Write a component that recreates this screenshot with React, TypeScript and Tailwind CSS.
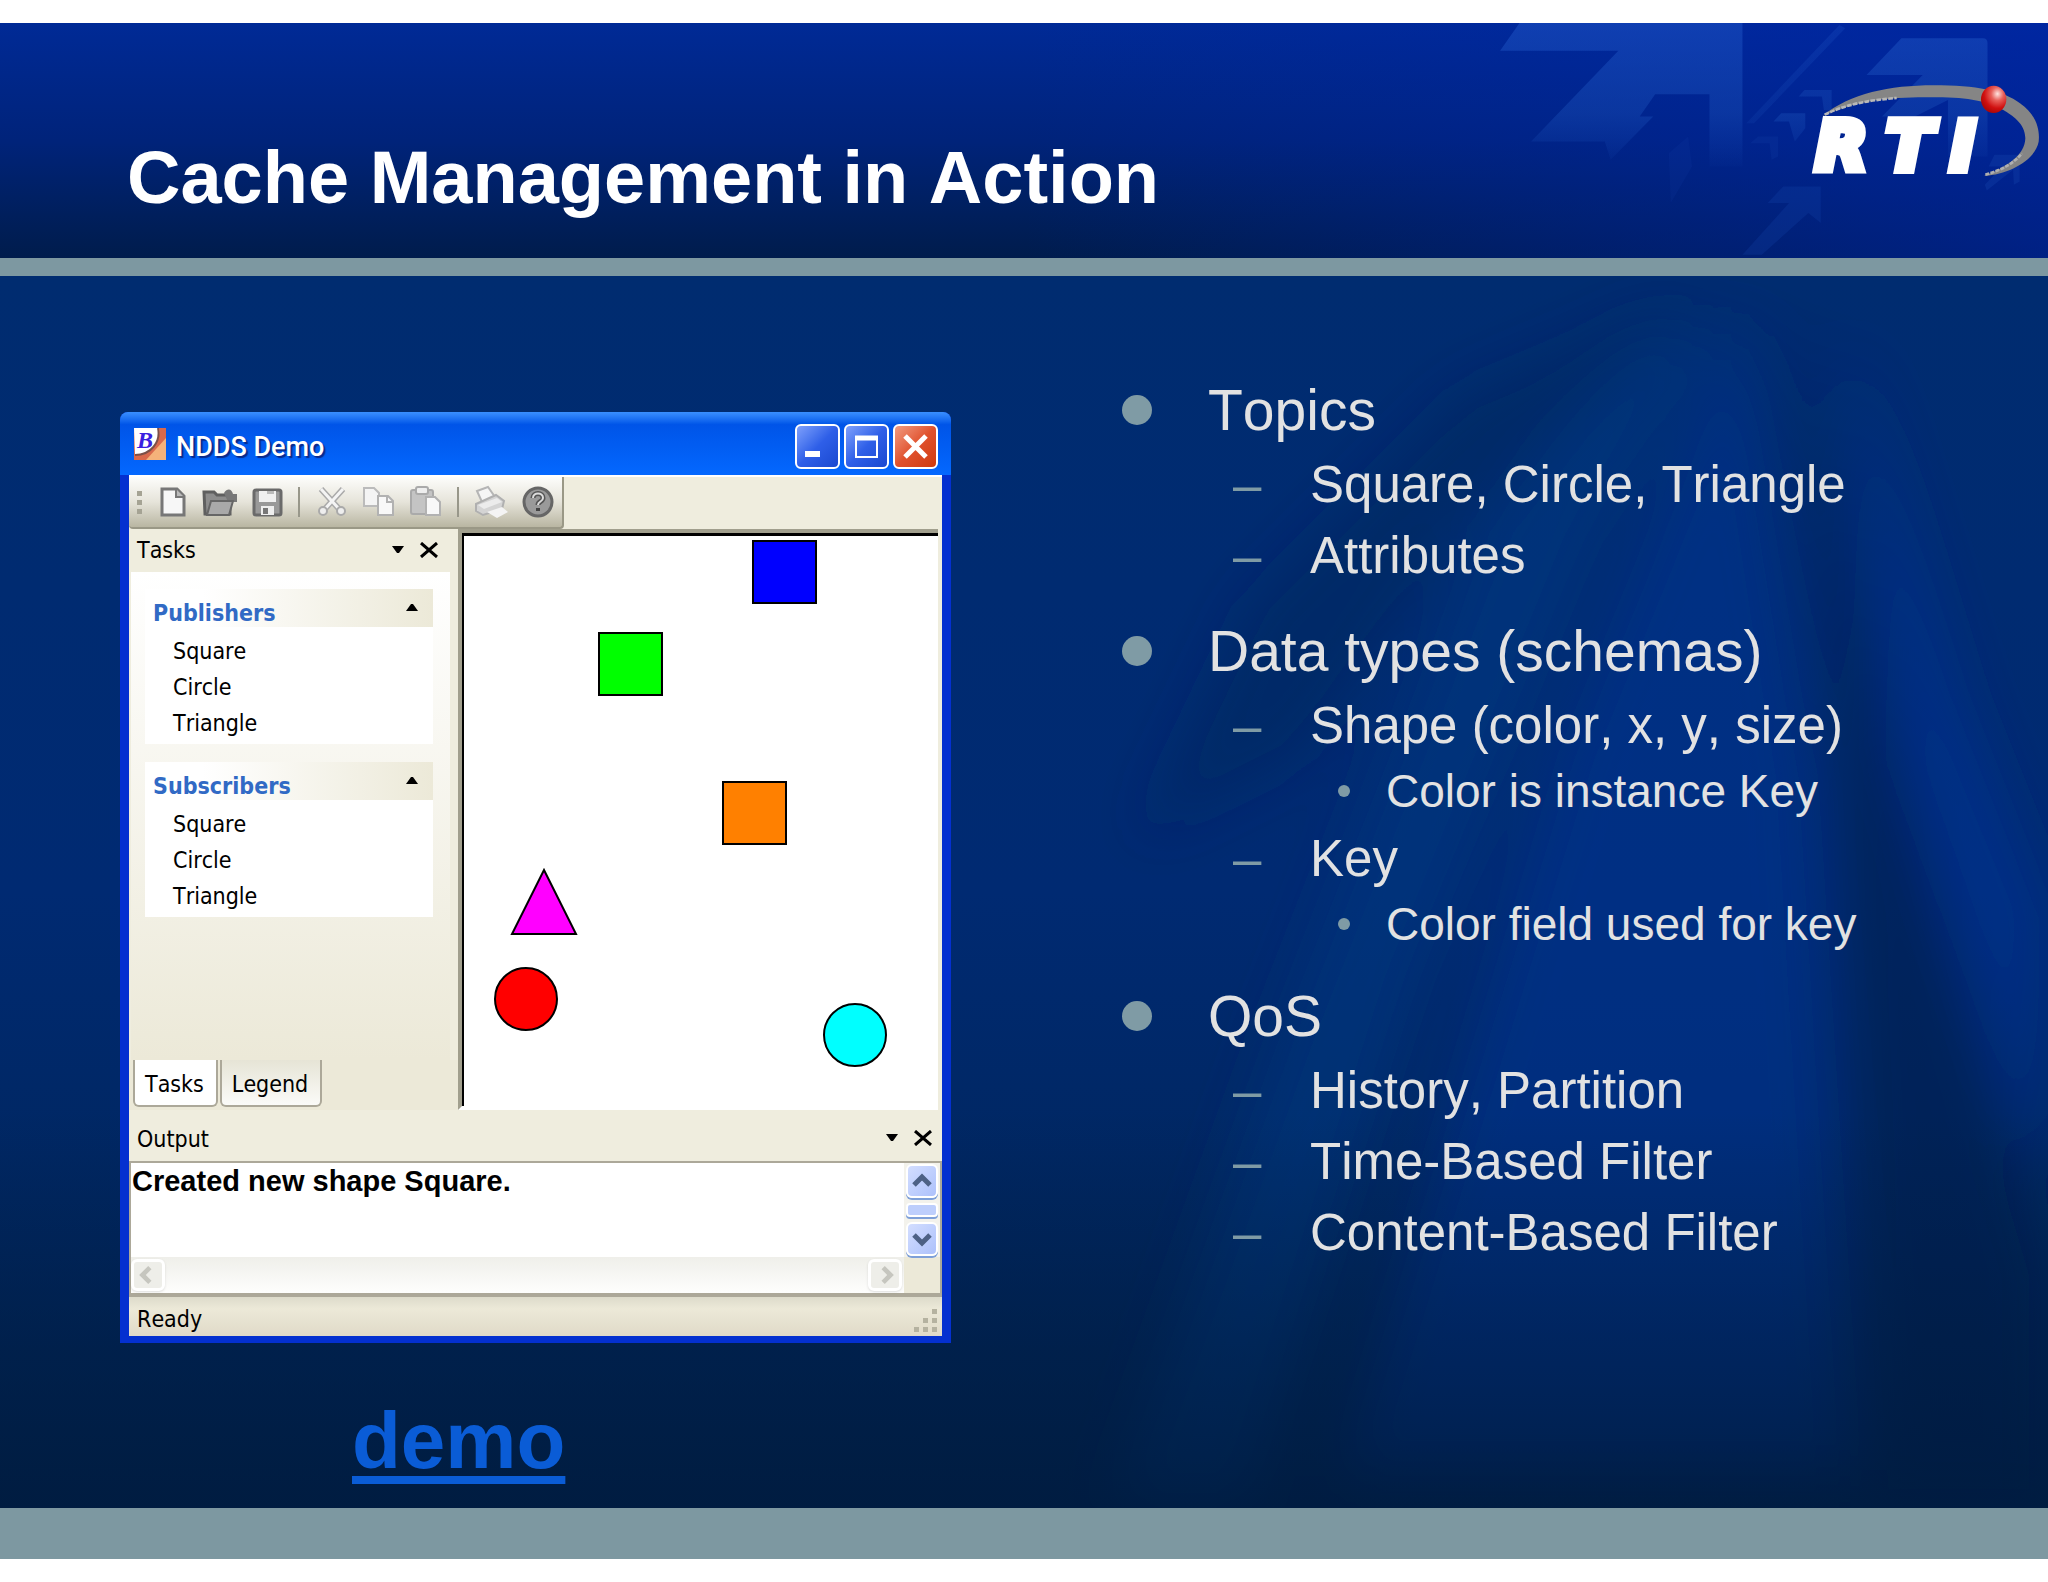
import React, { useState } from 'react';

type Level = 1 | 2 | 3;

interface OutlineItem {
  level: Level;
  text: string;
}

const outline: OutlineItem[] = [
  { level: 1, text: 'Topics' },
  { level: 2, text: 'Square, Circle, Triangle' },
  { level: 2, text: 'Attributes' },
  { level: 1, text: 'Data types (schemas)' },
  { level: 2, text: 'Shape (color, x, y, size)' },
  { level: 3, text: 'Color is instance Key' },
  { level: 2, text: 'Key' },
  { level: 3, text: 'Color field used for key' },
  { level: 1, text: 'QoS' },
  { level: 2, text: 'History, Partition' },
  { level: 2, text: 'Time-Based Filter' },
  { level: 2, text: 'Content-Based Filter' },
];

const shapeNames = ['Square', 'Circle', 'Triangle'];

const Logo = () => (
  <svg viewBox="0 0 774 390" className="relative h-[130px] w-[258px] shrink-0" role="img" aria-label="RTI">
    <defs>
      <radialGradient id="ball" cx="0.65" cy="0.3" r="0.7">
        <stop offset="0" stopColor="#ffe4e0" />
        <stop offset="0.35" stopColor="#e8605a" />
        <stop offset="0.75" stopColor="#d01010" />
        <stop offset="1" stopColor="#b00808" />
      </radialGradient>
    </defs>
    <path
      d="M98 138 C180 70 300 46 430 46 C560 46 640 62 690 100 C740 135 750 180 746 215 C735 270 660 312 582 318 C650 292 705 255 706 205 C706 160 665 135 640 120 C590 95 540 82 440 82 C320 80 210 86 98 138Z"
      fill="#858585"
    />
    <path d="M104 134 C170 102 240 90 320 84" fill="none" stroke="#b8b8b8" strokeWidth="8" strokeDasharray="14 4" />
    <path d="M586 314 C630 302 670 282 696 250" fill="none" stroke="#b0b0b0" strokeWidth="8" strokeDasharray="12 4" />
    <ellipse cx="611" cy="88" rx="38" ry="41" fill="url(#ball)" />
    <g
      fill="#fff"
      stroke="#fff"
      strokeWidth="24"
      fontFamily="'DejaVu Sans', sans-serif"
      fontWeight="700"
      fontStyle="italic"
      fontSize="204"
    >
      <text x="76" y="300">R</text>
      <text x="288" y="300">T</text>
      <text x="480" y="300">I</text>
    </g>
  </svg>
);

const HeaderArrows = () => (
  <svg
    viewBox="0 69 1568 706"
    preserveAspectRatio="none"
    className="absolute top-0 right-0 h-full w-[608px]"
    aria-hidden="true"
  >
    <defs>
      <linearGradient id="arrowFade" x1="0" y1="69" x2="0" y2="520" gradientUnits="userSpaceOnUse">
        <stop offset="0" stopColor="#1a4ec0" stopOpacity="0.6" />
        <stop offset="0.6" stopColor="#1a50b8" stopOpacity="0.4" />
        <stop offset="1" stopColor="#1a50b8" stopOpacity="0" />
      </linearGradient>
    </defs>
    <g fill="url(#arrowFade)">
      <path d="M205 69 H780 V500 H695 V283 H555 L515 350 H550 L440 480 L425 425 H235 L460 152 H155Z" />
      <path d="M1190 115 H1400 Q1412 115 1412 130 V470 H1310 V300 L1225 350 H1140 L1245 225 H1100Z" />
      <path d="M1030 75 L1045 85 L810 370 L790 370Z" opacity="0.5" />
      <path d="M940 270 H1010 V330 L990 330 L985 290 L925 290Z" opacity="0.8" />
      <path d="M880 340 H942 V385 L915 425 L900 365 H860Z" />
    </g>
    <g fill="#1a50b8">
      <path d="M885 560 H982 V670 L950 640 L830 765 H780 L900 610 H845Z" opacity="0.2" />
      <path d="M1430 465 H1495 V545 L1480 555 L1478 510 L1410 572 L1405 555 L1450 500 H1415Z" opacity="0.25" />
      <path d="M620 430 L640 410 L650 500 L595 610 L590 460Z" opacity="0.1" />
      <path d="M820 410 H872 V470 L855 480 L850 430 H800Z" opacity="0.15" />
    </g>
  </svg>
);

// Soft light rays fanning out from the top right
const Rays = () => (
  <svg
    viewBox="0 0 2048 1232"
    preserveAspectRatio="none"
    className="absolute inset-0 h-full w-full"
    aria-hidden="true"
  >
    <defs>
      <filter id="soft" x="-20%" y="-20%" width="140%" height="140%">
        <feGaussianBlur stdDeviation="28" />
      </filter>
      <linearGradient id="floor" x1="0" y1="0" x2="0" y2="1">
        <stop offset="0.68" stopColor="#001a3c" stopOpacity="0" />
        <stop offset="1" stopColor="#001a3c" stopOpacity="0.75" />
      </linearGradient>
    </defs>
    <g filter="url(#soft)">
      <path d="M1640 60 L1480 250 L1280 760 L1110 1232 H1250 L1420 700 L1600 260 L1720 60Z" fill="#003a86" opacity="0.45" />
      <path d="M1700 20 L1460 120 L1250 330 L1140 560 L1300 480 L1470 240Z" fill="#00235a" opacity="0.4" />
      <path d="M1740 40 L1560 480 L1340 1200 H1850 L1810 500Z" fill="#003490" opacity="0.6" />
      <path d="M1790 40 L1830 420 L1870 1232 H2048 V1000 L1960 700 L1860 340Z" fill="#001f50" opacity="0.6" />
      <path d="M1850 60 L1900 480 L2010 820 L2048 900 V640 L1960 420Z" fill="#0038a0" opacity="0.45" />
    </g>
    <rect width="2048" height="1232" fill="url(#floor)" />
  </svg>
);

const OutlineRow = ({ level, text }: OutlineItem) => {
  if (level === 1) {
    return (
      <li className="mt-[33px] flex items-center text-[57px] leading-[66px] first:mt-0">
        <span className="mr-14 size-[30px] shrink-0 rounded-full bg-[#7f9ba5]" />
        {text}
      </li>
    );
  }
  if (level === 2) {
    return (
      <li className="mt-[13px] flex pl-[111px] text-[51px] leading-[58px]">
        <span className="w-[77px] shrink-0 text-[#7f9ba5]">–</span>
        {text}
      </li>
    );
  }
  return (
    <li className="mt-[10px] flex items-center pl-[216px] text-[46px] leading-[52px]">
      <span className="mr-9 size-3 shrink-0 rounded-full bg-[#7f9ba5]" />
      {text}
    </li>
  );
};

const CaptionButton = ({ label, color, children }: { label: string; color: string; children: React.ReactNode }) => (
  <button aria-label={label} className={`size-[45px] rounded-md border-2 border-white ${color}`}>
    <svg viewBox="0 0 41 41" className="size-full" fill="none" stroke="#fff">
      {children}
    </svg>
  </button>
);

const ToolButton = ({ label, children }: { label: string; children: React.ReactNode }) => (
  <button aria-label={label} className="flex h-full w-[47px] items-center justify-center">
    <svg viewBox="0 0 36 36" className="size-9">
      {children}
    </svg>
  </button>
);

const ToolSeparator = () => <span className="mx-2 h-[30px] w-[2px] bg-[#98978a]" />;

const Toolbar = () => (
  <div className="h-[54px] border-t-2 border-white bg-[#efedde]">
    <div className="flex h-[52px] w-[435px] items-center rounded-b border-r-2 border-b-2 border-[#9a9886] bg-linear-to-b from-[#fdfdfb] via-[#e6e4da] to-[#b9b6a2]">
      <span className="flex w-5 flex-col items-center gap-1">
        <i className="size-[5px] bg-[#a5a394]" />
        <i className="size-[5px] bg-[#a5a394]" />
        <i className="size-[5px] bg-[#a5a394]" />
      </span>
      <ToolButton label="New">
        <path d="M7 5 H22 L29 12 V31 H7Z" fill="#f7f7f7" stroke="#777" strokeWidth="3" />
        <path d="M21 5 V13 H29" fill="#bbb" stroke="#777" strokeWidth="2" />
      </ToolButton>
      <ToolButton label="Open">
        <path d="M2 8 H12 L15 11 H28 V30 H3Z" fill="#8c8c8c" stroke="#5f5f5f" strokeWidth="3" />
        <path d="M22 9 C26 3 30 6 31 10 H35 V18 H26Z" fill="#777" />
        <path d="M9 17 H31 L27 31 H5Z" fill="#a9a9a9" stroke="#666" strokeWidth="2" />
      </ToolButton>
      <ToolButton label="Save">
        <rect x="5" y="6" width="27" height="25" rx="2" fill="#999" stroke="#6a6a6a" strokeWidth="3" />
        <rect x="10" y="7" width="17" height="11" fill="#f0f0f0" />
        <rect x="18" y="7" width="7" height="3" fill="#bbb" />
        <rect x="12" y="22" width="13" height="9" fill="#eee" />
        <rect x="14" y="24" width="5" height="6" fill="#777" />
      </ToolButton>
      <ToolSeparator />
      <ToolButton label="Cut">
        <path d="M7 5 L26 26 M29 5 L10 26" stroke="#aaa" strokeWidth="6" fill="none" />
        <path d="M7 5 L26 26 M29 5 L10 26" stroke="#f4f4f4" strokeWidth="3" fill="none" />
        <circle cx="9" cy="27" r="4" fill="#eee" stroke="#aaa" strokeWidth="2" />
        <circle cx="27" cy="27" r="4" fill="#eee" stroke="#aaa" strokeWidth="2" />
      </ToolButton>
      <ToolButton label="Copy">
        <path d="M3 4 H13 L18 9 V22 H3Z" fill="#f4f4f4" stroke="#bbb" strokeWidth="2" />
        <path d="M17 12 H27 L32 17 V31 H17Z" fill="#f8f8f8" stroke="#b2b2b2" strokeWidth="2" />
        <path d="M26 12 V18 H32" fill="none" stroke="#b2b2b2" strokeWidth="2" />
      </ToolButton>
      <ToolButton label="Paste">
        <rect x="3" y="6" width="22" height="24" rx="2" fill="#c4c4c4" stroke="#aaa" strokeWidth="2" />
        <rect x="8" y="3" width="12" height="7" rx="2" fill="#eee" stroke="#aaa" strokeWidth="2" />
        <path d="M18 13 H27 L32 18 V31 H18Z" fill="#f8f8f8" stroke="#b2b2b2" strokeWidth="2" />
      </ToolButton>
      <ToolSeparator />
      <ToolButton label="Print">
        <path d="M4 7 L15 3 L22 13 L9 18Z" fill="#f5f5f5" stroke="#b5b5b5" strokeWidth="2" />
        <path d="M3 20 L23 11 L31 17 L29 25 L10 31 L3 27Z" fill="#d4d4d4" stroke="#b0b0b0" strokeWidth="2" />
        <path d="M5 21 L24 14 L29 18 L11 25Z" fill="#ececec" />
        <path d="M14 28 L29 23 L35 28 L24 34Z" fill="#f4f4f4" />
      </ToolButton>
      <ToolButton label="Help">
        <circle cx="18" cy="18" r="14" fill="#9a9a9a" stroke="#666" strokeWidth="3" />
        <path d="M13 14 C13 8 23 8 23 14 C23 18 18 17 18 21" fill="none" stroke="#555" strokeWidth="5" />
        <path d="M13 14 C13 8 23 8 23 14 C23 18 18 17 18 21" fill="none" stroke="#ddd" strokeWidth="2" />
        <rect x="16" y="24" width="4" height="3" fill="#444" />
      </ToolButton>
    </div>
  </div>
);

const PaneControls = () => (
  <div className="flex items-center gap-4">
    <button aria-label="Pane menu">
      <svg viewBox="0 0 12 8" className="h-2 w-3">
        <path d="M0 0 H12 L7 7 H5Z" />
      </svg>
    </button>
    <button aria-label="Close pane">
      <svg viewBox="0 0 18 16" className="h-4 w-[18px]" stroke="#000" strokeWidth="3">
        <path d="M1 1 L17 15 M17 1 L1 15" />
      </svg>
    </button>
  </div>
);

const TaskGroup = ({ title }: { title: string }) => (
  <section className="bg-white">
    <h3 className="flex h-[38px] items-start justify-between bg-linear-to-r from-white from-20% to-[#ece9d8] pr-[15px] pl-2 text-[#316ac5]">
      <span className="pt-[10px] leading-7 font-bold">{title}</span>
      <button aria-label={`Collapse ${title}`} className="mt-[14px]">
        <svg viewBox="0 0 12 8" className="h-2 w-3">
          <path d="M0 8 H12 L7 1 H5Z" />
        </svg>
      </button>
    </h3>
    <ul className="pt-[6px] pb-[3px] pl-7 leading-9">
      {shapeNames.map((name) => (
        <li key={name}>
          <button className="block">{name}</button>
        </li>
      ))}
    </ul>
  </section>
);

const ShapeCanvas = () => (
  <div className="min-w-0 flex-1 pr-1">
    <div className="h-full border-t-4 border-b-4 border-l-4 border-[#a19f8d] border-b-white">
      <div className="h-full border-t-[3px] border-l-2 border-black bg-white">
        <svg className="block h-[570px] w-full" stroke="#000" strokeWidth="2">
          <rect x="289" y="5" width="63" height="62" fill="#0000ff" />
          <rect x="135" y="97" width="63" height="62" fill="#00ff00" />
          <rect x="259" y="246" width="63" height="62" fill="#ff8000" />
          <path d="M80 334 L112 398 H48Z" fill="#ff00ff" />
          <circle cx="62" cy="463" r="31" fill="#ff0000" />
          <circle cx="391" cy="499" r="31" fill="#00ffff" />
        </svg>
      </div>
    </div>
  </div>
);

const ScrollButton = ({ label, d, disabled = false }: { label: string; d: string; disabled?: boolean }) => (
  <button
    aria-label={label}
    disabled={disabled}
    className={
      disabled
        ? 'h-8 w-[34px] rounded-md border-3 border-white bg-[#eeeee9] text-[#c6c6bf] shadow'
        : 'h-[34px] w-8 rounded-md border-2 border-white bg-linear-to-br from-[#d3deff] to-[#adc1fb] text-[#4d6185] shadow-[0_2px_0_#7d9fd8]'
    }
  >
    <svg viewBox="0 0 28 28" className="size-full" fill="none" stroke="currentColor" strokeWidth="5">
      <path d={d} />
    </svg>
  </button>
);

const OutputPane = () => (
  <>
    <div className="flex h-[51px] items-center justify-between pt-1 pr-[10px] pl-2">
      <h2 className="pt-[2px] leading-7">Output</h2>
      <PaneControls />
    </div>
    <div className="border-x-2 border-t-2 border-b-4 border-[#aca899]">
      <div className="flex h-[94px] bg-white">
        <p className="flex-1 pt-[2px] pl-px font-['Liberation_Sans',sans-serif] text-[29px] leading-8 font-bold">
          Created new shape Square.
        </p>
        <div className="flex w-9 flex-col items-center bg-[#f3f2ec] pt-px">
          <ScrollButton label="Scroll up" d="M6 18 L14 10 L22 18" />
          <span className="my-[5px] h-[14px] w-8 rounded border-2 border-white bg-[#bdcefc] shadow-[0_2px_0_#7d9fd8]" />
          <ScrollButton label="Scroll down" d="M6 10 L14 18 L22 10" />
        </div>
      </div>
      <div className="flex h-9 bg-[#ece9d8]">
        <div className="flex flex-1 items-center justify-between bg-linear-to-b from-[#efefea] to-[#fefefd] pr-[2px]">
          <ScrollButton label="Scroll left" d="M16 6 L8 14 L16 22" disabled />
          <ScrollButton label="Scroll right" d="M12 6 L20 14 L12 22" disabled />
        </div>
        <span className="w-9" />
      </div>
    </div>
  </>
);

const DemoWindow = () => {
  const [tab, setTab] = useState('Tasks');

  return (
    <div className="rounded-t-lg border-x-[9px] border-b-[7px] border-[#0430d0] bg-[#0430d0] font-['DejaVu_Sans_Condensed','DejaVu_Sans',sans-serif] text-[23px] text-black">
      <div className="-mx-[9px] flex h-[63px] items-center rounded-t-lg bg-linear-to-b from-[#3a90ff] via-[#0054e8] via-20% to-[#0468ff] pr-[13px] pl-[14px]">
        <svg viewBox="0 0 32 32" className="mr-[10px] size-8" aria-hidden="true">
          <rect width="32" height="32" fill="#d9694c" />
          <path d="M32 10 V32 H12Z" fill="#f5b27a" />
          <path d="M0 0 H25 C27 14 17 27 1 26Z" fill="#fff" />
          <path d="M24 0 C27 14 17 27 1 27" fill="none" stroke="#7c5048" strokeWidth="2" />
          <text x="3" y="20" fontSize="24" fontWeight="700" fontStyle="italic" fontFamily="'Liberation Serif', serif" fill="#3a20e0">
            B
          </text>
        </svg>
        <h2 className="flex-1 pt-2 font-[Roboto,sans-serif] text-[27px] font-medium text-white [text-shadow:2px_2px_1px_#0a2a8a]">
          NDDS Demo
        </h2>
        <div className="flex gap-1 pt-[6px]">
          <CaptionButton label="Minimize" color="bg-linear-to-br from-[#7f9ffb] via-[#2f5fe8] to-[#1a48d0]">
            <path d="M8 28 H23" strokeWidth="6" />
          </CaptionButton>
          <CaptionButton label="Maximize" color="bg-linear-to-br from-[#7f9ffb] via-[#2f5fe8] to-[#1a48d0]">
            <path d="M10 11 H31 V31 H10Z" strokeWidth="2" />
            <path d="M9 12 H32" strokeWidth="5" />
          </CaptionButton>
          <CaptionButton label="Close" color="bg-linear-to-br from-[#f09a80] via-[#e0512c] to-[#cf3a0c]">
            <path d="M10 10 L31 31 M31 10 L10 31" strokeWidth="5" />
          </CaptionButton>
        </div>
      </div>

      <div className="bg-[#efedde]">
        <Toolbar />
        <div className="flex h-[581px]">
          <div className="flex w-[329px] flex-col">
            <div className="flex h-[43px] items-center justify-between pr-[20px] pb-[2px] pl-2">
              <h2 className="leading-7">Tasks</h2>
              <PaneControls />
            </div>
            <div className="mr-2 ml-[2px] flex flex-1 flex-col gap-[18px] bg-linear-to-b from-white to-[#ece9d8] pt-[17px] pr-[17px] pl-[14px]">
              <TaskGroup title="Publishers" />
              <TaskGroup title="Subscribers" />
            </div>
            <div role="tablist" className="flex h-[50px] gap-[2px] bg-[#ece9d8] pb-[3px] pl-1">
              {['Tasks', 'Legend'].map((name) => (
                <button
                  key={name}
                  role="tab"
                  aria-selected={tab === name}
                  onClick={() => setTab(name)}
                  className={`rounded-b-md border-x-2 border-b-2 border-[#aca899] pt-1 pr-3 pl-[10px] ${tab === name ? 'bg-white' : 'bg-linear-to-b from-[#e6e4d6] to-[#fbfbf8]'}`}
                >
                  {name}
                </button>
              ))}
            </div>
          </div>
          <ShapeCanvas />
        </div>
        <OutputPane />
        <div className="flex h-[39px] items-center justify-between bg-linear-to-b from-[#dddbcb] via-[#ece9d8] via-30% to-[#e0dac8] pr-1 pl-2">
          <p className="pt-1 leading-7">Ready</p>
          <svg viewBox="0 0 24 24" className="mt-2 size-6" fill="#b5b2a0" aria-hidden="true">
            <path d="M18 0h5v5h-5zM9 9h5v5h-5zM18 9h5v5h-5zM0 18h5v5h-5zM9 18h5v5h-5zM18 18h5v5h-5z" />
          </svg>
        </div>
      </div>
    </div>
  );
};

export default function App() {
  return (
    <div className="flex min-h-screen flex-col bg-white py-[23px] font-['Liberation_Sans',Arial,sans-serif] [font-kerning:none]">
      <header className="relative flex h-[235px] items-start justify-between overflow-hidden bg-linear-to-b from-[#002a96] via-[#00237a] to-[#001c4c] pl-[127px]">
        <div className="absolute inset-0 bg-linear-to-r from-transparent from-50% to-[#0024a8]/60" />
        <HeaderArrows />
        <h1 className="relative pt-[114px] text-[74px] leading-[82px] font-bold text-white">Cache Management in Action</h1>
        <div className="pt-[47px]">
          <Logo />
        </div>
      </header>
      <div className="h-[18px] bg-[#7d98a1]" />

      <main className="relative grid flex-1 grid-cols-[831fr_926fr] gap-x-[171px] bg-linear-to-b from-[#002c70] via-[#002a72] to-[#002350] pl-[120px]">
        <Rays />
        <div className="relative pt-[136px]">
          <DemoWindow />
          <a href="#demo" className="mt-[52px] ml-[232px] inline-block text-[80px] leading-[92px] font-bold text-[#0a5cd6] underline decoration-8 underline-offset-[8px]">
            demo
          </a>
        </div>
        <ul className="relative pt-[101px] text-[#e2e2e2]">
          {outline.map((item) => (
            <OutlineRow key={item.text} {...item} />
          ))}
        </ul>
      </main>
      <footer className="h-[51px] bg-[#7d98a1]" />
    </div>
  );
}
